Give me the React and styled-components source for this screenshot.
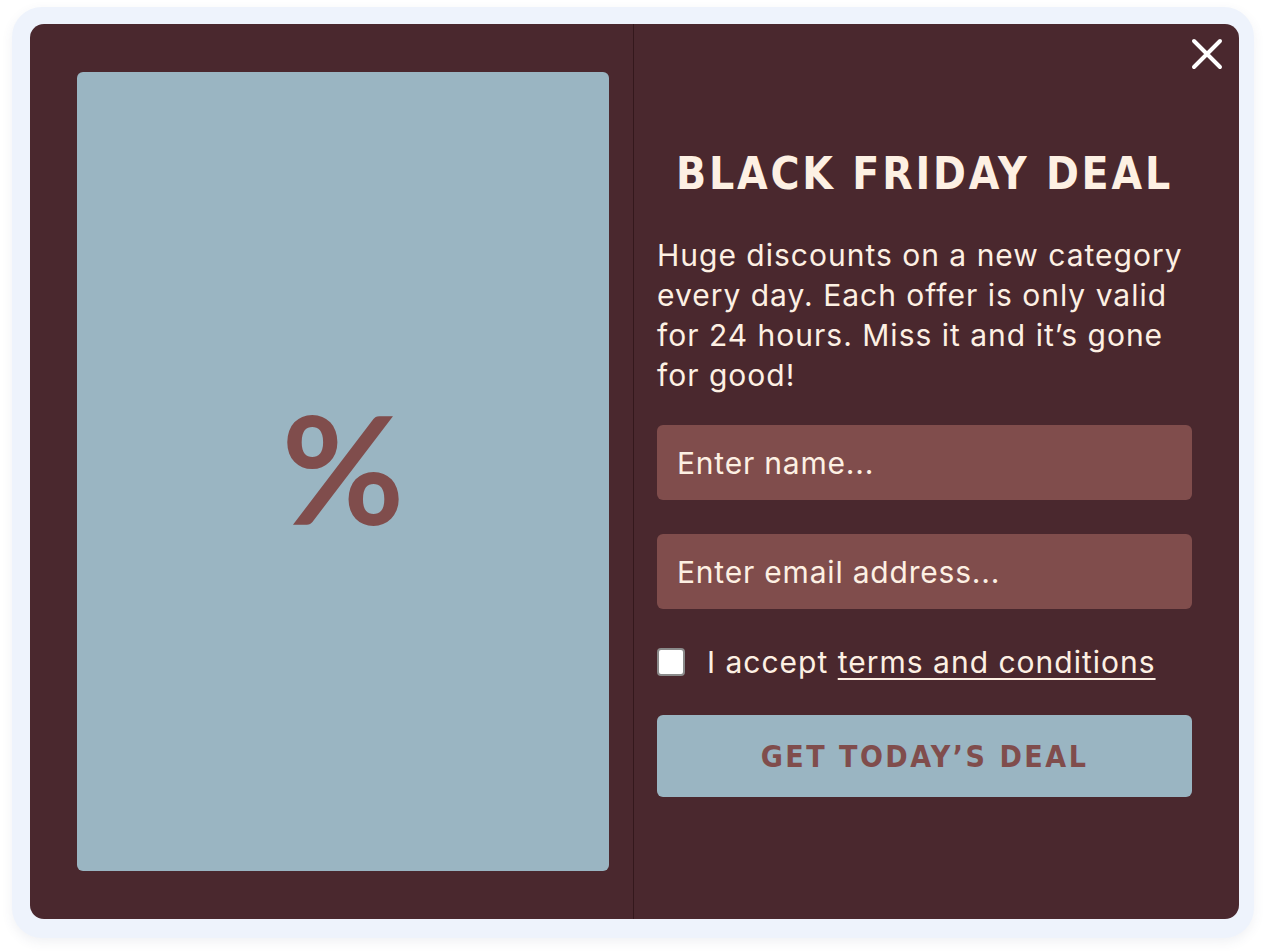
import React from "react";
import styled, { createGlobalStyle } from "styled-components";

const GlobalStyle = createGlobalStyle`
  html, body {
    margin: 0;
    padding: 0;
    background: #ffffff;
  }
  * { box-sizing: border-box; }
`;

const Page = styled.div`
  width: 1266px;
  height: 951px;
  padding: 7px 12px 13px 12px;
`;

const Frame = styled.div`
  height: 100%;
  background: #eef3fc;
  border-radius: 30px;
  padding: 17px 15px 19px 18px;
  box-shadow: 0 4px 12px rgba(60, 80, 120, 0.08);
`;

const Modal = styled.div`
  position: relative;
  height: 100%;
  background: #4a282e;
  border-radius: 14px;
  display: grid;
  grid-template-columns: 604px 1fr;
  overflow: hidden;
`;

const ImageSide = styled.div`
  padding: 48px 24px 48px 47px;
  border-right: 1px solid #34181c;
`;

const ImageBox = styled.div`
  height: 100%;
  background: #9ab5c2;
  border-radius: 6px;
  display: flex;
  align-items: center;
  justify-content: center;
`;

const Percent = styled.span`
  font-family: "Lato", sans-serif;
  font-weight: 700;
  font-size: 150px;
  line-height: 1;
  color: #804d4c;
  margin-top: -10px;
`;

const FormSide = styled.div`
  padding: 128px 47px 0 23px;
  display: flex;
  flex-direction: column;
`;

const Title = styled.h1`
  margin: 0;
  text-align: center;
  font-family: "DejaVu Sans Condensed", "DejaVu Sans", sans-serif;
  font-weight: 700;
  font-size: 44px;
  letter-spacing: 2.8px;
  line-height: 1;
  color: #fdf0e3;
`;

const Copy = styled.p`
  margin: 39px 0 0 0;
  font-family: "Inter", sans-serif;
  font-weight: 400;
  font-size: 30px;
  line-height: 40px;
  letter-spacing: 1px;
  color: #fdf0e3;
`;

const Field = styled.input`
  width: 100%;
  height: 75px;
  margin-top: ${(p) => p.$top}px;
  border: none;
  outline: none;
  border-radius: 6px;
  background: #804d4c;
  padding: 0 20px;
  font-family: "Inter", sans-serif;
  font-size: 30px;
  letter-spacing: 0.8px;
  color: #fdf0e3;
  &::placeholder {
    color: #fdf0e3;
    opacity: 1;
  }
`;

const CheckRow = styled.label`
  margin-top: 35px;
  display: flex;
  align-items: center;
  gap: 22px;
  font-family: "Inter", sans-serif;
  font-size: 30px;
  letter-spacing: 1px;
  color: #fdf0e3;
`;

const Box = styled.span`
  width: 28px;
  height: 28px;
  background: #ffffff;
  border: 2px solid #8a8a8a;
  border-radius: 4px;
  flex-shrink: 0;
`;

const Terms = styled.span`
  text-decoration: underline;
  text-underline-offset: 5px;
  text-decoration-thickness: 2px;
`;

const Submit = styled.button`
  margin-top: 35px;
  height: 82px;
  border: none;
  border-radius: 6px;
  background: #9ab5c2;
  font-family: "DejaVu Sans Condensed", "DejaVu Sans", sans-serif;
  font-weight: 700;
  font-size: 30px;
  letter-spacing: 2.5px;
  color: #804d4c;
  cursor: pointer;
`;

const Close = styled.button`
  position: absolute;
  top: 10px;
  right: 12px;
  width: 40px;
  height: 40px;
  border: none;
  background: none;
  padding: 0;
  display: flex;
  align-items: center;
  justify-content: center;
  cursor: pointer;
`;

export default function App() {
  return (
    <>
      <GlobalStyle />
      <Page>
        <Frame>
          <Modal>
            <ImageSide>
              <ImageBox>
                <Percent>%</Percent>
              </ImageBox>
            </ImageSide>
            <FormSide>
              <Title>BLACK FRIDAY DEAL</Title>
              <Copy>
                Huge discounts on a new category every day. Each offer is only
                valid for 24 hours. Miss it and it’s gone for good!
              </Copy>
              <Field $top={30} placeholder="Enter name..." />
              <Field $top={34} placeholder="Enter email address..." />
              <CheckRow>
                <Box />
                <span>
                  I accept <Terms>terms and conditions</Terms>
                </span>
              </CheckRow>
              <Submit>GET TODAY’S DEAL</Submit>
            </FormSide>
            <Close aria-label="Close">
              <svg width="32" height="32" viewBox="0 0 32 32">
                <path
                  d="M3 3 L29 29 M29 3 L3 29"
                  stroke="#ffffff"
                  strokeWidth="4"
                  strokeLinecap="round"
                />
              </svg>
            </Close>
          </Modal>
        </Frame>
      </Page>
    </>
  );
}
